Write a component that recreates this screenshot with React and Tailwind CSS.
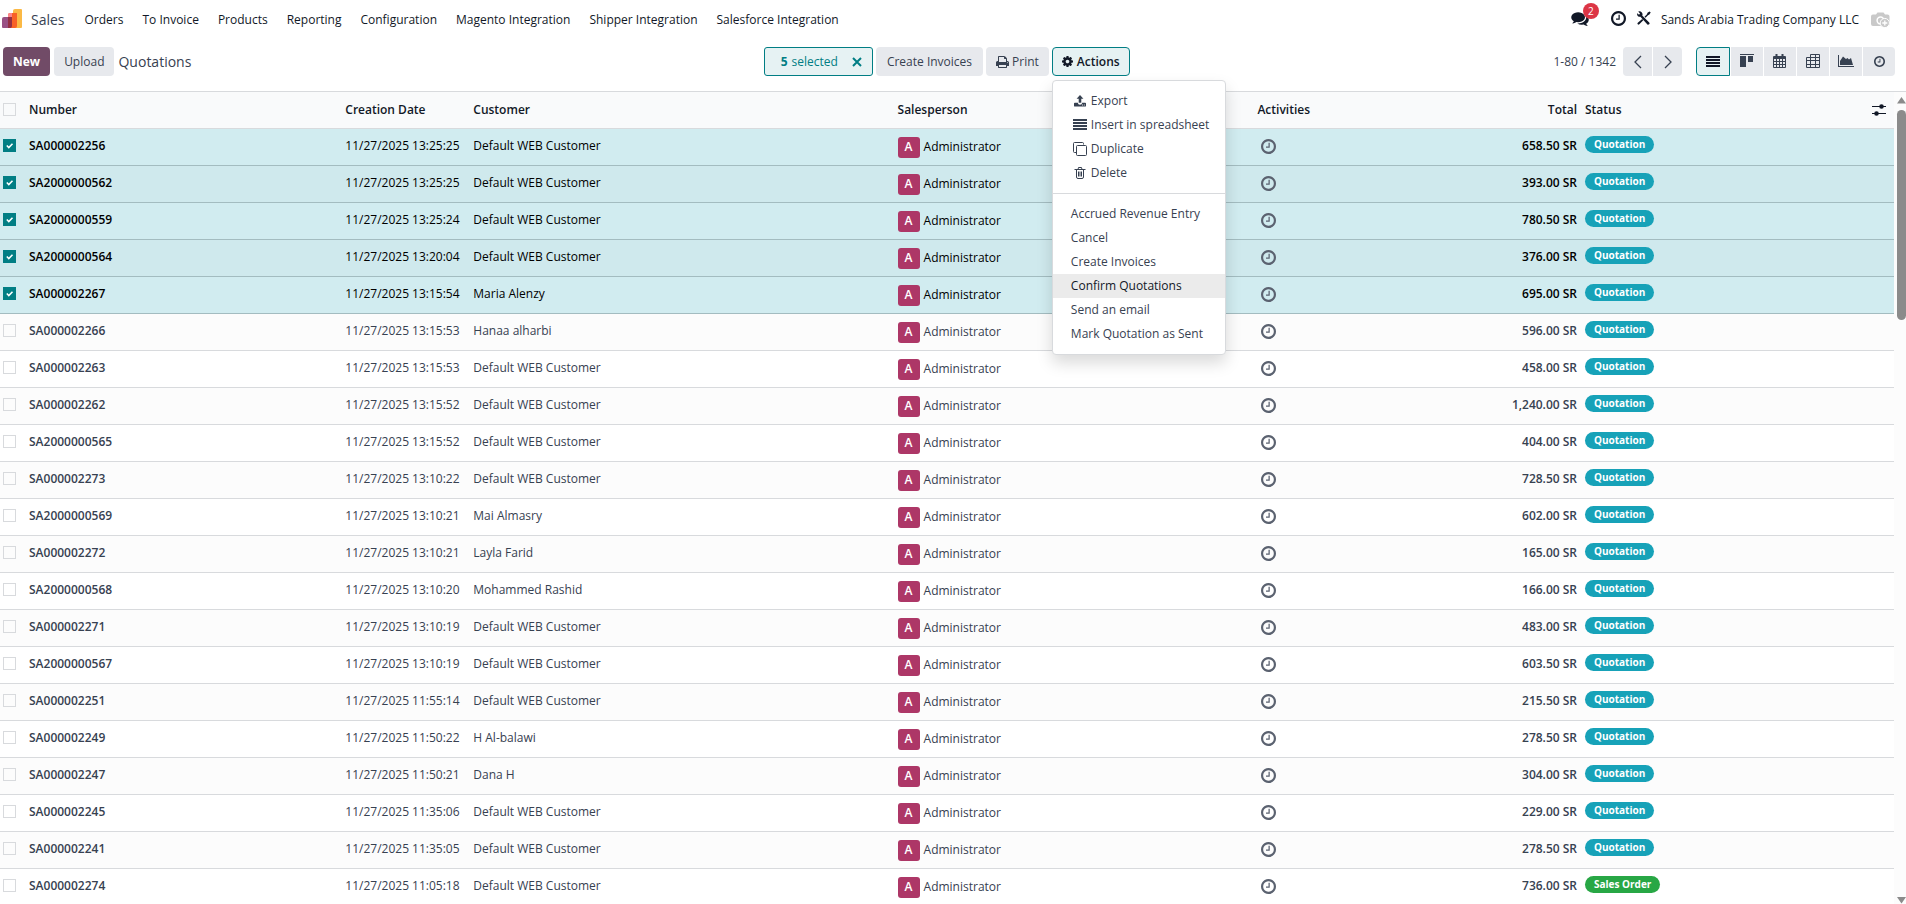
import React, { useState } from 'react';
import clsx from 'clsx';

const MENUS = ['Orders', 'To Invoice', 'Products', 'Reporting', 'Configuration', 'Magento Integration', 'Shipper Integration', 'Salesforce Integration'];

const ORDERS = [
  ['SA000002256', '11/27/2025 13:25:25', 'Default WEB Customer', '658.50'],
  ['SA2000000562', '11/27/2025 13:25:25', 'Default WEB Customer', '393.00'],
  ['SA2000000559', '11/27/2025 13:25:24', 'Default WEB Customer', '780.50'],
  ['SA2000000564', '11/27/2025 13:20:04', 'Default WEB Customer', '376.00'],
  ['SA000002267', '11/27/2025 13:15:54', 'Maria Alenzy', '695.00'],
  ['SA000002266', '11/27/2025 13:15:53', 'Hanaa alharbi', '596.00'],
  ['SA000002263', '11/27/2025 13:15:53', 'Default WEB Customer', '458.00'],
  ['SA000002262', '11/27/2025 13:15:52', 'Default WEB Customer', '1,240.00'],
  ['SA2000000565', '11/27/2025 13:15:52', 'Default WEB Customer', '404.00'],
  ['SA000002273', '11/27/2025 13:10:22', 'Default WEB Customer', '728.50'],
  ['SA2000000569', '11/27/2025 13:10:21', 'Mai Almasry', '602.00'],
  ['SA000002272', '11/27/2025 13:10:21', 'Layla Farid', '165.00'],
  ['SA2000000568', '11/27/2025 13:10:20', 'Mohammed Rashid', '166.00'],
  ['SA000002271', '11/27/2025 13:10:19', 'Default WEB Customer', '483.00'],
  ['SA2000000567', '11/27/2025 13:10:19', 'Default WEB Customer', '603.50'],
  ['SA000002251', '11/27/2025 11:55:14', 'Default WEB Customer', '215.50'],
  ['SA000002249', '11/27/2025 11:50:22', 'H Al-balawi', '278.50'],
  ['SA000002247', '11/27/2025 11:50:21', 'Dana H', '304.00'],
  ['SA000002245', '11/27/2025 11:35:06', 'Default WEB Customer', '229.00'],
  ['SA000002241', '11/27/2025 11:35:05', 'Default WEB Customer', '278.50'],
  ['SA000002274', '11/27/2025 11:05:18', 'Default WEB Customer', '736.00', 'Sales Order'],
];

const ACTIONS = ['Accrued Revenue Entry', 'Cancel', 'Create Invoices', 'Confirm Quotations', 'Send an email', 'Mark Quotation as Sent'];

function Icon({ box = '0 0 14 14', className, children }) {
  return (
    <svg viewBox={box} fill="currentColor" aria-hidden="true" className={clsx('shrink-0', className)}>
      {children}
    </svg>
  );
}

const Logo = () => (
  <Icon box="0 0 20 20" className="w-5 h-5 mb-[2px]">
    <path fill="#fbb945" d="M13 0h6a1 1 0 0 1 1 1v17a1 1 0 0 1-1 1h-8V2a2 2 0 0 1 2-2z" />
    <path fill="#f86126" d="M8 4h7v13a2 2 0 0 1-2 2H6V6a2 2 0 0 1 2-2z" />
    <path fill="#fc868b" d="M8 4h2v4H6V6a2 2 0 0 1 2-2z" />
    <path fill="#985184" d="M2 8h7v11H1a1 1 0 0 1-1-1v-8a2 2 0 0 1 2-2z" />
    <path fill="#953042" d="M6 8h4v9a2 2 0 0 1-2 2H6z" />
  </Icon>
);

const ClockIcon = ({ className }) => (
  <Icon box="0 128 1536 1536" className={className}>
    <path d="M896 544v448q0 14-9 23t-23 9h-320q-14 0-23-9t-9-23v-64q0-14 9-23t23-9h224v-352q0-14 9-23t23-9h64q14 0 23 9t9 23zm416 352q0-148-73-273t-198-198-273-73-273 73-198 198-73 273 73 273 198 198 273 73 273-73 198-198 73-273zm224 0q0 209-103 385.5t-279.5 279.5-385.5 103-385.5-103-279.5-279.5-103-385.5 103-385.5 279.5-279.5 385.5-103 385.5 103 279.5 279.5 103 385.5z" />
  </Icon>
);

const ChatIcon = () => (
  <Icon box="0 128 1792 1536" className="w-[18px] h-[15px]">
    <path d="M1408 768q0 139-94 257t-256.5 186.5-353.5 68.5q-86 0-176-16-124 88-278 128-36 9-86 16h-3q-11 0-20.5-8t-11.5-21q-1-3-1-6.5t.5-6.5 2-6l2.5-5 3.5-5.5 4-5 4.5-5 4-4.5q5-6 23-25t26-29.5 22.5-29 25-38.5 20.5-44q-124-72-195-177t-71-224q0-139 94-257t256.5-186.5 353.5-68.5 353.5 68.5 256.5 186.5 94 257zm384 256q0 120-71 224.5t-195 176.5q10 24 20.5 44t25 38.5 22.5 29 26 29.5 23 25q1 1 4 4.5t4.5 5 4 5 3.5 5.5l2.5 5 2 6 .5 6.5-1 6.5q-3 14-13 22t-22 7q-50-7-86-16-154-40-278-128-90 16-176 16-271 0-472-132 58 4 88 4 161 0 309-45t264-129q125-92 192-212t67-254q0-77-23-152 129 71 204 178t75 230z" />
  </Icon>
);

const ToolsIcon = () => (
  <Icon className="w-[14px] h-[14px]">
    <path d="M1.2.6L3 2.4 2.4 3.6 1 3.2.2 2A3.2 3.2 0 0 0 1 5.2a3 3 0 0 0 2.4.6l6.8 7.4a1.3 1.3 0 0 0 2-1.7L5.2 4.6A3 3 0 0 0 1.2.6z" />
    <path d="M12.6.4l1.1 1.1-1.3 2.1-1.4.6-2.5 2.5-1-1L10 3.2l.5-1.5zM5.2 8l1.1 1.2-4 4.1a1 1 0 0 1-1.5-1.5z" />
  </Icon>
);

const CameraIcon = () => (
  <Icon box="0 0 19 16" className="w-[19px] h-4">
    <path fill="#c9c9c9" d="M2 2.5h3l1.5-2h6l1.5 2h2.5a2 2 0 0 1 2 2V12a2 2 0 0 1-2 2H2a2 2 0 0 1-2-2V4.5a2 2 0 0 1 2-2z" />
    <circle cx="9.5" cy="8.5" r="3.4" fill="none" stroke="#fff" strokeWidth="1.5" />
    <circle cx="13.8" cy="11" r="4.6" fill="#c9c9c9" stroke="#fff" />
    <path d="M13.8 8.5v5M11.3 11h5" stroke="#fff" strokeWidth="1.3" />
  </Icon>
);

const PrintIcon = () => (
  <Icon box="0 128 1664 1536" className="w-[13px] h-3">
    <path d="M384 1536h896v-256h-896v256zm0-640h896v-384h-160q-40 0-68-28t-28-68v-160h-640v640zm1152 64q0-26-19-45t-45-19-45 19-19 45 19 45 45 19 45-19 19-45zm128 0v416q0 13-9.5 22.5t-22.5 9.5h-224v160q0 40-28 68t-68 28h-960q-40 0-68-28t-28-68v-160h-224q-13 0-22.5-9.5t-9.5-22.5v-416q0-79 56.5-135.5t135.5-56.5h64v-544q0-40 28-68t68-28h672q40 0 88 20t76 48l152 152q28 28 48 76t20 88v256h64q79 0 135.5 56.5t56.5 135.5z" />
  </Icon>
);

const CogIcon = () => (
  <Icon box="0 128 1536 1536" className="w-[11px] h-[11px]">
    <path d="M1024 896q0-106-75-181t-181-75-181 75-75 181 75 181 181 75 181-75 75-181zm512-109v222q0 12-8 23t-20 13l-185 28q-19 54-39 91 35 50 107 138 10 12 10 25t-9 23q-27 37-99 108t-94 71q-12 0-26-9l-138-108q-44 23-91 38-16 136-29 186-7 28-36 28h-222q-14 0-24.5-8.5t-11.5-21.5l-28-184q-49-16-90-37l-141 107q-10 9-25 9-14 0-25-11-126-114-165-168-7-10-7-23 0-12 8-23 15-21 51-66.5t54-70.5q-27-50-41-99l-183-27q-13-2-21-12.5t-8-23.5v-222q0-12 8-23t19-13l186-28q14-46 39-92-40-57-107-138-10-12-10-24 0-10 9-23 26-36 98.5-107.5t94.5-71.5q13 0 26 10l138 107q44-23 91-38 16-136 29-186 7-28 36-28h222q14 0 24.5 8.5t11.5 21.5l28 184q49 16 90 37l142-107q9-9 24-9 13 0 25 10 129 119 165 170 7 8 7 22 0 12-8 23-15 21-51 66.5t-54 70.5q26 50 41 98l183 28q13 2 21 12.5t8 23.5z" />
  </Icon>
);

const ListIcon = ({ className }) => (
  <Icon box="0 0 14 11" className={clsx('w-[14px] h-[11px]', className)}>
    <path d="M0 0h14v2H0zM0 3h14v2H0zM0 6h14v2H0zM0 9h14v2H0z" />
  </Icon>
);

const ExportIcon = () => (
  <Icon className="w-3 h-3">
    <path d="M7 0l4 4.5H8.5V9h-3V4.500H3zM1 9h3.500a2.500 2.500 0 0 0 5 0H13a1 1 0 0 1 1 1v2.500a1 1 0 0 1-1 1H1a1 1 0 0 1-1-1V10a1 1 0 0 1 1-1z" />
    <path fill="#fff" d="M9.500 11.200h1v1h-1zM11.500 11.200h1v1h-1z" />
  </Icon>
);

const CopyIcon = () => (
  <Icon className="w-[14px] h-[14px]">
    <path fill="none" stroke="currentColor" d="M3.5 10.5h-2a1 1 0 0 1-1-1v-8a1 1 0 0 1 1-1h8a1 1 0 0 1 1 1v1M4.5 3.5h8a1 1 0 0 1 1 1v8a1 1 0 0 1-1 1h-8a1 1 0 0 1-1-1v-8a1 1 0 0 1 1-1z" />
  </Icon>
);

const TrashIcon = () => (
  <Icon box="0 0 12 14" className="w-3 h-[14px]">
    <path fill="none" stroke="currentColor" d="M.5 3.5h11M4 3.500l.5-2h3l.5 2M2.500 3.500v7.500a1.500 1.500 0 0 0 1.500 1.500h4a1.500 1.500 0 0 0 1.500-1.500V3.500M4.500 5.500v5M6 5.500v5M7.500 5.500v5" />
  </Icon>
);

const ChevronIcon = ({ d }) => (
  <Icon box="0 0 8 14" className="w-2 h-[14px]">
    <path d={d} fill="none" stroke="currentColor" strokeWidth="1.3" />
  </Icon>
);

const KanbanIcon = () => (
  <Icon className="w-[14px] h-[14px] mb-px">
    <path d="M0 0h14v1H0zM0 2h6v11H0zM8 2h5v6H8z" />
  </Icon>
);

const CalendarIcon = () => (
  <Icon box="0 0 13 14" className="w-[13px] h-[14px] mb-px mr-px">
    <path d="M1 2h11a1 1 0 0 1 1 1v10a1 1 0 0 1-1 1H1a1 1 0 0 1-1-1V3a1 1 0 0 1 1-1z" />
    <path d="M3.5 0v4M9.500 0v4" stroke="currentColor" strokeWidth="2" />
    <path fill="#e7e9ed" d="M1 5h2v2H1zM4 5h2v2H4zM7 5h2v2H7zM10 5h2v2h-2zM1 8h2v2H1zM4 8h2v2H4zM7 8h2v2H7zM10 8h2v2h-2zM1 11h2v2H1zM4 11h2v2H4zM7 11h2v2H7zM10 11h2v2h-2z" />
  </Icon>
);

const PivotIcon = () => (
  <Icon className="w-[14px] h-[14px] mb-px">
    <path fill="none" stroke="currentColor" d="M4.5 3.5v-3h9v13H.5v-10h13M.5 6.500h13M.5 10.500h13M4.500 3.500v10M9.500.5v13" />
  </Icon>
);

const ChartIcon = () => (
  <Icon box="0 0 16 12" className="w-4 h-3 mb-px">
    <path d="M0 0h1v11h15v1H0zM2 10V6l3-4.500L8 4l1.500-1L11 4.500 13 3l2 7z" />
  </Icon>
);

const SlidersIcon = () => (
  <Icon box="0 0 14 12" className="w-[14px] h-3">
    <path d="M0 2.5h14M0 9.500h14" stroke="currentColor" />
    <circle cx="9.5" cy="2.5" r="2.3" />
    <circle cx="4.5" cy="9.5" r="2.3" />
  </Icon>
);

const RECORD_ACTIONS = [
  ['Export', <ExportIcon />],
  ['Insert in spreadsheet', <ListIcon className="mb-px" />],
  ['Duplicate', <CopyIcon />],
  ['Delete', <TrashIcon />],
];

const VIEWS = [
  ['Kanban', <KanbanIcon />],
  ['Calendar', <CalendarIcon />],
  ['Pivot', <PivotIcon />],
  ['Graph', <ChartIcon />],
  ['Activity', <ClockIcon className="w-[11px] h-[11px]" />],
];

function Checkbox({ label, checked, onChange }) {
  return (
    <span className="relative block w-[13px] h-[13px] -ml-px mb-px">
      <input
        type="checkbox"
        aria-label={label}
        checked={checked}
        onChange={onChange}
        className="block appearance-none w-[13px] h-[13px] border border-[#d8dadd] checked:bg-[#017e84] checked:border-[#017e84]"
      />
      {checked && (
        <svg viewBox="0 0 13 13" className="absolute inset-0 pointer-events-none" aria-hidden="true">
          <path d="M3.8 6.5l2 2 3.700-3.700" fill="none" stroke="#fff" strokeWidth="1.6" />
        </svg>
      )}
    </span>
  );
}

function ActionsMenu() {
  return (
    <div className="absolute z-10 left-0 top-full mt-1 w-[174px] py-2 bg-white border border-[#d8dadd] rounded shadow-[0_8px_16px_rgba(0,0,0,0.15)] text-[#374151]">
      {RECORD_ACTIONS.map(([label, icon]) => (
        <button key={label} type="button" className="flex items-center w-full h-6 pl-5 gap-1 hover:bg-gray-100">
          <span className="flex justify-center w-[14px]">{icon}</span>
          {label}
        </button>
      ))}
      <hr className="my-2 border-[#d8dadd]" />
      {ACTIONS.map((label) => (
        <button
          key={label}
          type="button"
          className={clsx('flex items-center w-full h-6 pl-[18px]', label === 'Confirm Quotations' && 'bg-[#ebebeb] text-[#111827]')}
        >
          {label}
        </button>
      ))}
    </div>
  );
}

export default function App() {
  const [selected, setSelected] = useState(ORDERS.slice(0, 5).map((o) => o[0]));
  const [menuOpen, setMenuOpen] = useState(true);

  const toggle = (id) => setSelected(selected.includes(id) ? selected.filter((s) => s !== id) : [...selected, id]);

  const btn = 'flex items-center h-[29px] rounded bg-[#e7e9ed] font-medium text-[#374151]';

  return (
    <div className="flex flex-col h-screen overflow-hidden bg-white font-['Open_Sans','Noto_Sans',sans-serif] text-xs text-[#374151]">
      <header className="flex items-center h-[38px] shrink-0 pt-[2px] pl-[2px] pr-4 text-[#111827]">
        <Logo />
        <a href="#sales" className="ml-[9px] text-sm text-[#374151]">Sales</a>
        <nav className="flex gap-[19px] ml-5">
          {MENUS.map((m) => <a key={m} href="#menu">{m}</a>)}
        </nav>
        <div className="flex items-center ml-auto">
          <button type="button" aria-label="Messages" className="relative mr-[22px] mb-1">
            <ChatIcon />
            <span className="absolute -top-2 left-3 w-4 h-4 rounded-full bg-[#dc3545] text-white text-[10px] leading-4 text-center">2</span>
          </button>
          <button type="button" aria-label="Activities" className="mr-[11px] mb-1"><ClockIcon className="w-[15px] h-[15px]" /></button>
          <button type="button" aria-label="Developer tools" className="mr-[10px] mb-1"><ToolsIcon /></button>
          <button type="button" className="mr-3">Sands Arabia Trading Company LLC</button>
          <button type="button" aria-label="User"><CameraIcon /></button>
        </div>
      </header>

      <div className="flex items-start shrink-0 pt-[9px] pb-[15px] pr-[11px]">
        <div className="flex items-center shrink-0 w-[40.3%] pl-[3px] gap-1">
          <button type="button" className="h-[29px] px-[10px] rounded bg-[#714b67] text-white font-bold">New</button>
          <button type="button" className={clsx(btn, 'px-[10px]')}>Upload</button>
          <span className="text-sm">Quotations</span>
        </div>

        <div className="flex items-center gap-[3px]">
          <div className="flex items-center h-[29px] pl-4 pr-[10px] gap-1 rounded-[3px] border border-[#017e84] bg-[#e6f2f3] text-[#017e84]">
            <b>{selected.length}</b> selected
            <button type="button" aria-label="Unselect all" onClick={() => setSelected([])} className="ml-[10px]">
              <Icon box="0 0 10 10" className="w-[10px] h-[10px]">
                <path d="M1 1l8 8M9 1l-8 8" stroke="currentColor" strokeWidth="2" />
              </Icon>
            </button>
          </div>
          <button type="button" className={clsx(btn, 'px-[11px]')}>Create Invoices</button>
          <button type="button" className={clsx(btn, 'px-[10px] gap-[3px]')}><PrintIcon /> Print</button>
          <div className="relative">
            <button
              type="button"
              aria-expanded={menuOpen}
              onClick={() => setMenuOpen(!menuOpen)}
              className="flex items-center h-[29px] px-[9px] gap-1 rounded border border-[#017e84] bg-[#e6f2f3] font-semibold text-[#111827]"
            >
              <CogIcon /> Actions
            </button>
            {menuOpen && <ActionsMenu />}
          </div>
        </div>

        <div className="flex items-center ml-auto">
          <span className="mr-[7px]">1-80 / 1342</span>
          <div className="flex gap-px mr-[14px]">
            <button type="button" aria-label="Previous" className="flex items-center justify-center w-[29px] h-[29px] rounded-l bg-[#e7e9ed]">
              <ChevronIcon d="M7 1L1 7l6 6" />
            </button>
            <button type="button" aria-label="Next" className="flex items-center justify-center w-[29px] h-[29px] rounded-r bg-[#e7e9ed]">
              <ChevronIcon d="M1 1l6 6-6 6" />
            </button>
          </div>
          <div className="flex gap-px">
            <button type="button" aria-label="List" className="flex items-center justify-center w-[34px] h-[29px] rounded-l border border-[#017e84] bg-[#e6f2f3] text-[#111827]">
              <ListIcon />
            </button>
            {VIEWS.map(([label, icon]) => (
              <button key={label} type="button" aria-label={label} className="flex items-center justify-center w-[32px] h-[29px] bg-[#e7e9ed] last:rounded-r">
                {icon}
              </button>
            ))}
          </div>
        </div>
      </div>

      <div className="flex flex-1 min-h-0 border-t border-[#d8dadd]">
        <div className="flex-1 overflow-hidden">
          <table className="w-full table-fixed border-separate border-spacing-0 text-left whitespace-nowrap">
            <colgroup>
              <col className="w-[25px]" />
              <col className="w-[16.7%]" />
              <col className="w-[128px]" />
              <col className="w-[22.4%]" />
              <col className="w-[19%]" />
              <col className="w-[9.8%]" />
              <col className="w-[142px]" />
              <col />
              <col className="w-[30px]" />
            </colgroup>
            <thead className="bg-[#f9fafb] text-[#111827]">
              <tr className="[&>th]:h-[37px] [&>th]:px-1 [&>th]:font-semibold [&>th]:border-b [&>th]:border-[#d8dadd]">
                <th>
                  <Checkbox
                    label="Select all"
                    checked={selected.length === ORDERS.length}
                    onChange={(e) => setSelected(e.target.checked ? ORDERS.map((o) => o[0]) : [])}
                  />
                </th>
                <th>Number</th>
                <th>Creation Date</th>
                <th>Customer</th>
                <th>Salesperson</th>
                <th>Activities</th>
                <th className="text-right">Total</th>
                <th>Status</th>
                <th><button type="button" aria-label="Optional columns" className="block ml-1"><SlidersIcon /></button></th>
              </tr>
            </thead>
            <tbody>
              {ORDERS.map(([id, date, customer, total, status = 'Quotation']) => {
                const on = selected.includes(id);
                return (
                  <tr
                    key={id}
                    className={clsx(
                      '[&>td]:h-[37px] [&>td]:px-1 [&>td]:pb-[2px] [&>td]:border-b',
                      on ? 'bg-[#d1ecf0] even:bg-[#cfe9ed] text-black [&>td]:border-[#a3bcc0]' : 'bg-white even:bg-[#fcfcfc] [&>td]:border-[#d8dadd]'
                    )}
                  >
                    <td><Checkbox label={`Select ${id}`} checked={on} onChange={() => toggle(id)} /></td>
                    <td className="font-semibold">{id}</td>
                    <td>{date}</td>
                    <td>{customer}</td>
                    <td>
                      <div className="flex items-center gap-1 pt-[2px]">
                        <span className="flex items-center justify-center w-[22px] h-[21px] rounded-[3px] bg-[#ad3767] text-white font-semibold">A</span>
                        Administrator
                      </div>
                    </td>
                    <td>
                      <button type="button" aria-label="Schedule activity" className="block ml-1 text-[#5b6270]">
                        <ClockIcon className="w-[15px] h-[15px]" />
                      </button>
                    </td>
                    <td className="text-right font-semibold">{total} SR</td>
                    <td>
                      <span className={clsx('block w-fit h-[17px] mb-[3px] px-[9px] rounded-full text-[10px] leading-4 font-bold text-white', status === 'Quotation' ? 'bg-[#17a2b8]' : 'bg-[#28a745]')}>
                        {status}
                      </span>
                    </td>
                    <td></td>
                  </tr>
                );
              })}
            </tbody>
          </table>
        </div>

        {/* scroll track */}
        <div className="flex flex-col items-end w-3 pt-[5px] bg-[#fcfcfc] text-[#8b8b8b]">
          <Icon box="0 0 9 7" className="w-[9px] h-[7px]"><path d="M4.5 0L9 6.5H0z" /></Icon>
          <div className="w-[9px] h-[26%] mt-[6px] rounded-full bg-[#8b8b8b]"></div>
          <Icon box="0 0 9 7" className="w-[9px] h-[7px] mt-auto"><path d="M4.5 6.5L9 0H0z" /></Icon>
        </div>
      </div>
    </div>
  );
}
